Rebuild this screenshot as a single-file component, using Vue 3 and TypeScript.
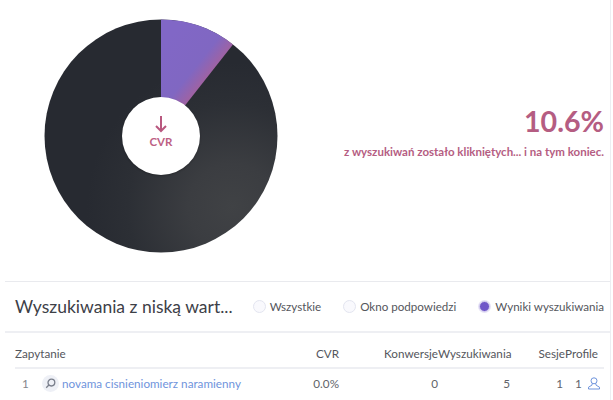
<template>
  <div class="panel">
    <section class="summary">
      <div class="chart-wrap">
        <svg class="donut" width="234" height="234" viewBox="0 0 234 234">
          <defs>
            <radialGradient id="darkGrad" gradientUnits="userSpaceOnUse" cx="188" cy="188" r="145">
              <stop offset="0" stop-color="#404245" />
              <stop offset="0.3" stop-color="#3b3d41" />
              <stop offset="0.72" stop-color="#2c2f35" />
              <stop offset="1" stop-color="#272a31" />
            </radialGradient>
            <linearGradient id="purpleGrad" gradientUnits="userSpaceOnUse" x1="118" y1="28" x2="168" y2="68">
              <stop offset="0" stop-color="#8167c6" />
              <stop offset="0.6" stop-color="#8067c2" />
              <stop offset="0.92" stop-color="#a8619a" />
            </linearGradient>
          </defs>
          <circle cx="117" cy="117" r="116.5" fill="url(#darkGrad)" />
          <path :d="slicePath" fill="url(#purpleGrad)" />
        </svg>
        <div class="hole">
          <svg width="12" height="17" viewBox="0 0 12 17" fill="none" stroke="#b9587f" stroke-width="2">
            <path d="M6 0v15" />
            <path d="M1 10l5 5 5-5" />
          </svg>
          <span class="hole-label">CVR</span>
        </div>
      </div>
      <div class="stat">
        <div class="stat-value">{{ cvr }}%</div>
        <div class="stat-text">z wyszukiwań zostało klikniętych... i na tym koniec.</div>
      </div>
    </section>

    <header class="list-head">
      <h2 class="list-title">Wyszukiwania z niską wart...</h2>
      <div class="radios">
        <label v-for="opt in options" :key="opt.label" class="radio">
          <span class="dot" :class="{ on: opt.active }"></span>
          {{ opt.label }}
        </label>
      </div>
    </header>

    <div class="table">
      <div class="row head">
        <span>Zapytanie</span>
        <span class="num">CVR</span>
        <span class="num">Konwersje</span>
        <span class="num">Wyszukiwania</span>
        <span class="num">Sesje</span>
        <span class="num">Profile</span>
      </div>
      <div v-for="(r, i) in rows" :key="r.query" class="row body">
        <span class="query">
          <span class="idx">{{ i + 1 }}</span>
          <span class="lens">
            <svg width="11" height="11" viewBox="0 0 11 11" fill="none" stroke="#7a7f8c" stroke-width="1.3">
              <circle cx="6.4" cy="4.6" r="3.4" />
              <path d="M3.9 7L1.2 9.8" />
            </svg>
          </span>
          <a class="link">{{ r.query }}</a>
        </span>
        <span class="num">{{ r.cvr }}</span>
        <span class="num">{{ r.conversions }}</span>
        <span class="num">{{ r.searches }}</span>
        <span class="num sess">{{ r.sessions }}</span>
        <span class="prof">
          {{ r.profiles }}
          <svg width="12" height="13" viewBox="0 0 12 13" fill="none" stroke="#6f94dc" stroke-width="1">
            <circle cx="6" cy="3.8" r="3" />
            <path d="M4.3 6.4L3.9 8.2 0.5 10.2v1.8h11v-1.8L8.1 8.2 7.7 6.4" />
          </svg>
        </span>
      </div>
    </div>
  </div>
</template>

<script setup lang="ts">
import { computed } from 'vue';

const cvr = 10.6;

const slicePath = computed(() => {
  const a = (cvr / 100) * Math.PI * 2;
  const x = 117 + 116.5 * Math.sin(a);
  const y = 117 - 116.5 * Math.cos(a);
  return `M117 117 L117 0.5 A116.5 116.5 0 0 1 ${x.toFixed(2)} ${y.toFixed(2)} Z`;
});

const options = [
  { label: 'Wszystkie', active: false },
  { label: 'Okno podpowiedzi', active: false },
  { label: 'Wyniki wyszukiwania', active: true },
];

const rows = [
  { query: 'novama cisnieniomierz naramienny', cvr: '0.0%', conversions: 0, searches: 5, sessions: 1, profiles: 1 },
];
</script>

<style>
html, body { margin: 0; background: #fff; overflow: hidden; }
</style>

<style scoped>
.panel { width: 606px; height: 400px; margin-left: 5px; border-right: 1px solid #eceef2; box-sizing: border-box; font-family: Lato, sans-serif; color: #54565c; overflow: hidden; }

.summary { height: 282px; box-sizing: border-box; border-bottom: 1px solid #e9eaee; display: flex; justify-content: space-between; padding: 19px 6px 0 39px; }
.chart-wrap { position: relative; width: 234px; height: 234px; }
.donut { display: block; }
.hole { position: absolute; left: 78px; top: 78px; width: 78px; height: 78px; border-radius: 50%; background: #fff; box-shadow: 0 1px 2px rgba(0, 0, 0, 0.25); display: flex; flex-direction: column; align-items: center; justify-content: center; box-sizing: border-box; padding-bottom: 8px; }
.hole-label { font-size: 11.5px; line-height: 13px; font-weight: 700; color: #bd5f85; margin-top: 2px; }

.stat { text-align: right; padding-top: 85px; color: #b55d82; }
.stat-value { font-size: 28.6px; line-height: 35px; font-weight: 700; }
.stat-text { font-size: 11.5px; line-height: 15px; font-weight: 700; margin-top: 5px; white-space: nowrap; }

.list-head { height: 51px; box-sizing: border-box; border-bottom: 2px solid #eeeff3; display: flex; align-items: center; justify-content: space-between; padding: 0 6px 0 10px; }
.list-title { margin: 0; font-size: 17.5px; line-height: 26px; font-weight: 400; color: #3d4047; white-space: nowrap; }
.radios { display: flex; gap: 22px; }
.radio { display: flex; align-items: center; gap: 4px; font-size: 11.6px; line-height: 16px; color: #54565c; white-space: nowrap; }
.dot { width: 11px; height: 11px; border-radius: 50%; border: 1px solid #e3e5f0; background: #f9f9fd; }
.dot.on { width: 9px; height: 9px; margin: 1px; background: #6f56c8; border: 1px solid #d8d2f0; box-shadow: 0 0 0 1px #e6e2f6; }

.table { padding: 0 6px 0 10px; font-size: 11.7px; }
.row { display: grid; grid-template-columns: 295px 29px 99px 72px 55px 38px; align-items: center; }
.row.head { height: 36px; padding-top: 5px; border-bottom: 2px solid #eeeff3; box-sizing: border-box; color: #54565c; }
.row.body { height: 28px; color: #62646a; }
.num { text-align: right; white-space: nowrap; }
.head .num:last-child { padding-right: 6px; }
.sess { padding-right: 2px; }
.prof { display: flex; align-items: center; justify-content: flex-start; gap: 6px; padding-left: 10px; white-space: nowrap; }
.query { display: flex; align-items: center; }
.idx { width: 27px; color: #85878c; padding-left: 7px; box-sizing: border-box; }
.lens { width: 17px; height: 17px; border-radius: 50%; background: #eef0f6; display: flex; align-items: center; justify-content: center; margin-right: 3px; }
.link { color: #6f94dc; white-space: nowrap; }
</style>
